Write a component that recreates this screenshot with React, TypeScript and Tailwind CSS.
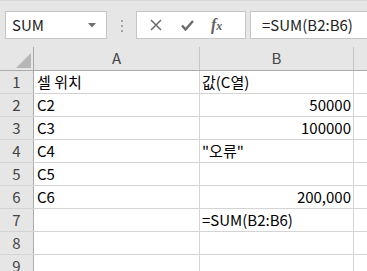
import React from "react";

const font = { fontFamily: '"Noto Sans CJK KR", "Noto Sans", sans-serif' };

type Row = { n: number; a: string; b: string; right?: boolean };

const rows: Row[] = [
  { n: 1, a: "셀 위치", b: "값(C열)" },
  { n: 2, a: "C2", b: "50000", right: true },
  { n: 3, a: "C3", b: "100000", right: true },
  { n: 4, a: "C4", b: "\"오류\"" },
  { n: 5, a: "C5", b: "" },
  { n: 6, a: "C6", b: "200,000", right: true },
  { n: 7, a: "", b: "=SUM(B2:B6)" },
  { n: 8, a: "", b: "" },
  { n: 9, a: "", b: "" },
];

function FormulaBar() {
  return (
    <div className="flex h-[47px] items-start border-t border-[#d6d6d6] bg-[#e6e6e6] pt-[10px]">
      <div className="ml-[5px] flex h-[28px] w-[102px] items-center justify-between border border-[#c6c6c6] bg-white pl-[6px] pr-[10px]">
        <span className="text-[15px] text-[#222]">SUM</span>
        <svg width="8" height="5" viewBox="0 0 8 5">
          <path d="M0 0h8L4 4.5z" fill="#6f6f6f" />
        </svg>
      </div>
      <div className="ml-[14px] mt-[9px] flex flex-col gap-[3px]">
        <span className="h-[2px] w-[2px] bg-[#a6a6a6]" />
        <span className="h-[2px] w-[2px] bg-[#a6a6a6]" />
        <span className="h-[2px] w-[2px] bg-[#a6a6a6]" />
      </div>
      <div className="ml-[13px] flex h-[28px] w-[110px] items-center border border-[#c6c6c6] bg-white">
        <svg className="ml-[13px]" width="12" height="12" viewBox="0 0 12 12">
          <path d="M1 1l10 10M11 1L1 11" stroke="#6a6a6a" strokeWidth="1.5" />
        </svg>
        <svg className="ml-[19px]" width="13" height="11" viewBox="0 0 13 11">
          <path d="M1 5.5l3.5 4L12 1" stroke="#6a6a6a" strokeWidth="2.4" fill="none" />
        </svg>
        <span
          className="ml-[17px] text-[16px] font-bold italic text-[#606060]"
          style={{ fontFamily: '"Liberation Serif", serif' }}
        >
          f<span className="text-[12px]">x</span>
        </span>
      </div>
      <div className="ml-[4px] flex h-[28px] flex-1 items-center border border-r-0 border-[#c6c6c6] bg-white pl-[11px]">
        <span className="text-[15px] text-[#222]">=SUM(B2:B6)</span>
      </div>
    </div>
  );
}

export default function App() {
  return (
    <div className="h-[271px] w-[367px] overflow-hidden bg-white text-[15px]" style={font}>
      <FormulaBar />
      <div className="flex h-[24px] border-b border-[#ababab] bg-[#e6e6e6] text-[#444]">
        <div className="relative w-[34px] border-r border-[#ababab]">
          <svg className="absolute bottom-[2px] right-[2px]" width="15" height="15" viewBox="0 0 15 15">
            <path d="M15 0V15H0z" fill="#b5b5b5" />
          </svg>
        </div>
        <div className="flex w-[166px] items-end justify-center border-r border-[#c6c6c6] pb-[1px]">A</div>
        <div className="flex w-[154px] items-end justify-center border-r border-[#c6c6c6] pb-[1px]">B</div>
        <div className="flex-1" />
      </div>
      {rows.map((r) => (
        <div key={r.n} className="flex h-[23px] border-b border-[#d4d4d4]">
          <div className="flex w-[34px] items-end justify-center border-r border-[#ababab] bg-[#e6e6e6] text-[#444]">
            {r.n}
          </div>
          <div className="flex w-[166px] items-end border-r border-[#d4d4d4] pl-[3px] text-black">
            {r.a}
          </div>
          <div
            className={
              "flex w-[154px] items-end border-r border-[#d4d4d4] px-[2px] text-black " +
              (r.right ? "justify-end" : "justify-start")
            }
          >
            {r.b}
          </div>
          <div className="flex-1" />
        </div>
      ))}
    </div>
  );
}
